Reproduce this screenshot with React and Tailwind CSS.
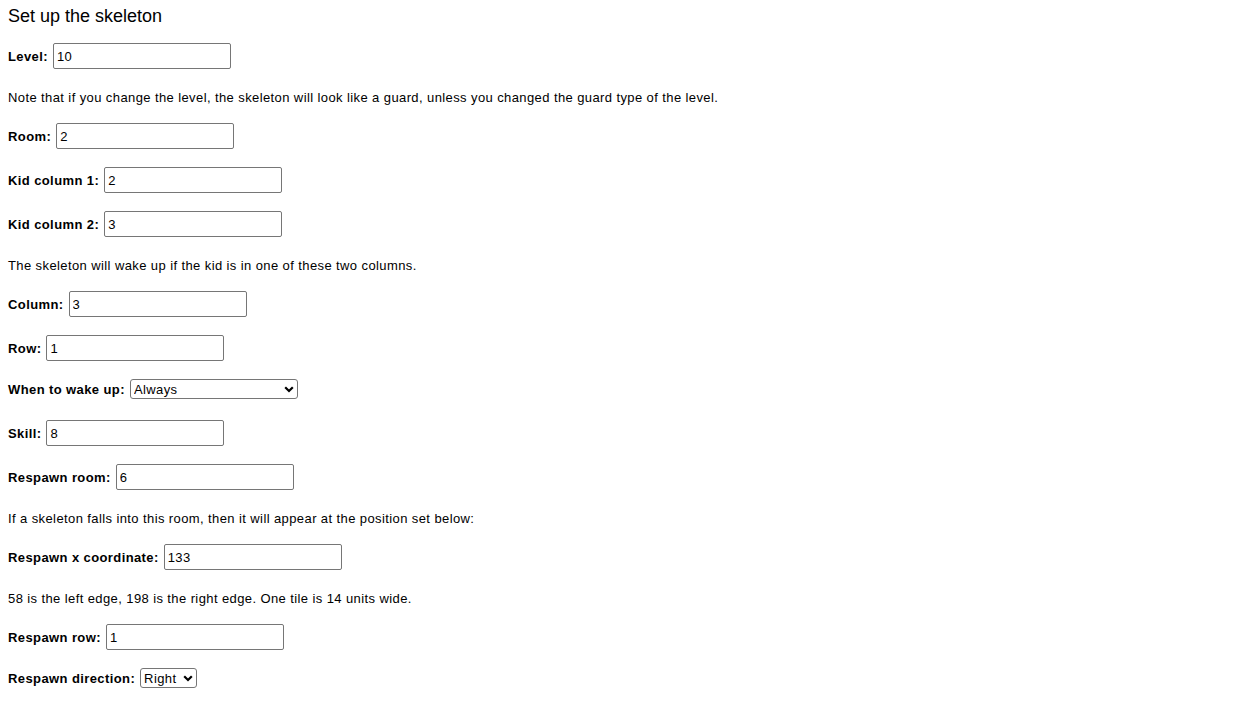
import React from "react";

const inputCls =
  "w-[178px] h-[26px] border border-[#767676] rounded-[2px] bg-white pl-[3px] pr-[2px] text-[13px] tracking-[0.4px] text-black outline-none";

function Field({ label, value, mt }) {
  return (
    <div className={`flex items-center gap-[5px] ${mt}`}>
      <span className="font-bold">{label}</span>
      <input className={inputCls} defaultValue={value} />
    </div>
  );
}

function Chevron() {
  return (
    <svg width="10" height="7" viewBox="0 0 10 7" className="absolute right-[4px] top-[7px] pointer-events-none">
      <path d="M1.2 1.2 L5 5 L8.8 1.2" fill="none" stroke="#000" strokeWidth="2.2" strokeLinecap="butt" />
    </svg>
  );
}

function SelectField({ label, value, width, mt, options }) {
  return (
    <div className={`flex items-center gap-[5px] ${mt}`}>
      <span className="font-bold">{label}</span>
      <div className={`relative h-[20px] ${width}`}>
        <select
          defaultValue={value}
          className="appearance-none w-full h-[20px] border border-[#767676] rounded-[3px] bg-white pl-[3px] pr-[16px] text-[13px] leading-[15px] tracking-[0.4px] text-black outline-none"
        >
          {options.map((o) => (
            <option key={o}>{o}</option>
          ))}
        </select>
        <Chevron />
      </div>
    </div>
  );
}

export default function App() {
  return (
    <div
      className="min-h-[701px] bg-white px-[8px] pb-[10px] text-[13px] leading-[15px] tracking-[0.4px] text-black flex flex-col items-start"
      style={{ fontFamily: '"Liberation Sans", Arial, sans-serif' }}
    >
      <div className="mt-[6px] text-[18px] leading-[21px] tracking-normal">Set up the skeleton</div>
      <Field label="Level:" value="10" mt="mt-[16px]" />
      <p className="mt-[21px]">
        Note that if you change the level, the skeleton will look like a guard, unless you changed the guard type of the level.
      </p>
      <Field label="Room:" value="2" mt="mt-[18px]" />
      <Field label="Kid column 1:" value="2" mt="mt-[18px]" />
      <Field label="Kid column 2:" value="3" mt="mt-[18px]" />
      <p className="mt-[21px]">The skeleton will wake up if the kid is in one of these two columns.</p>
      <Field label="Column:" value="3" mt="mt-[18px]" />
      <Field label="Row:" value="1" mt="mt-[18px]" />
      <SelectField
        label="When to wake up:"
        value="Always"
        width="w-[168px]"
        mt="mt-[18px]"
        options={["Always", "Never"]}
      />
      <Field label="Skill:" value="8" mt="mt-[21px]" />
      <Field label="Respawn room:" value="6" mt="mt-[18px]" />
      <p className="mt-[21px]">If a skeleton falls into this room, then it will appear at the position set below:</p>
      <Field label="Respawn x coordinate:" value="133" mt="mt-[18px]" />
      <p className="mt-[21px]">58 is the left edge, 198 is the right edge. One tile is 14 units wide.</p>
      <Field label="Respawn row:" value="1" mt="mt-[18px]" />
      <SelectField
        label="Respawn direction:"
        value="Right"
        width="w-[57px]"
        mt="mt-[18px]"
        options={["Right", "Left"]}
      />
    </div>
  );
}
